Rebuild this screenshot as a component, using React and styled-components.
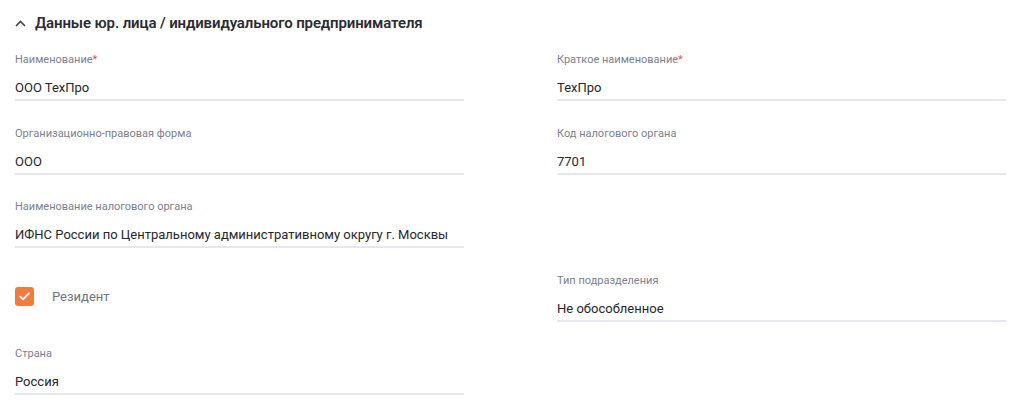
import React from "react";
import styled, { createGlobalStyle } from "styled-components";

const GlobalStyle = createGlobalStyle`
  body {
    margin: 0;
    background: #ffffff;
    font-family: Roboto, "Liberation Sans", sans-serif;
  }
`;

const Section = styled.section`
  padding: 11px 18px 0 15px;
`;

const Header = styled.div`
  display: flex;
  align-items: center;
  gap: 9px;
  height: 24px;
  margin-bottom: 18px;
  color: #2a2b33;
  font-size: 15px;
  font-weight: 600;
  letter-spacing: -0.12px;
`;

const Grid = styled.div`
  display: grid;
  grid-template-columns: 449px 449px;
  column-gap: 93px;
  row-gap: 25.5px;
`;

const Field = styled.div`
  display: flex;
  flex-direction: column;
  height: 48px;
`;

const Label = styled.div`
  font-size: 11px;
  line-height: 14px;
  color: #7b8091;
  margin-bottom: 11px;
`;

const Required = styled.span`
  color: #e8505b;
`;

const Value = styled.div`
  font-size: 13px;
  line-height: 20px;
  color: #25262e;
  padding-bottom: 1px;
  border-bottom: 2px solid #e6e7ee;
  white-space: nowrap;
`;

const CheckRow = styled.label`
  display: flex;
  align-items: center;
  gap: 18px;
  height: 48px;
  padding-bottom: 2px;
  box-sizing: border-box;
`;

const Box = styled.span`
  width: 19px;
  height: 19px;
  border-radius: 3px;
  background: #f47b3e;
  display: flex;
  align-items: center;
  justify-content: center;
`;

const CheckText = styled.span`
  font-size: 13px;
  color: #6e7381;
`;

const Empty = styled.div``;

function FormField({ label, value, required }) {
  return (
    <Field>
      <Label>
        {label}
        {required && <Required>*</Required>}
      </Label>
      <Value>{value}</Value>
    </Field>
  );
}

function App() {
  return (
    <>
      <GlobalStyle />
      <Section>
        <Header>
          <svg width="11" height="7" viewBox="0 0 11 7">
            <path d="M1 6 L5.5 1.5 L10 6" fill="none" stroke="#3d4350" strokeWidth="1.6" />
          </svg>
          Данные юр. лица / индивидуального предпринимателя
        </Header>
        <Grid>
          <FormField label="Наименование" value="ООО ТехПро" required />
          <FormField label="Краткое наименование" value="ТехПро" required />
          <FormField label="Организационно-правовая форма" value="ООО" />
          <FormField label="Код налогового органа" value="7701" />
          <FormField
            label="Наименование налогового органа"
            value="ИФНС России по Центральному административному округу г. Москвы"
          />
          <Empty />
          <CheckRow>
            <Box>
              <svg width="11" height="9" viewBox="0 0 11 9">
                <path d="M1.2 4.6 L4 7.3 L9.8 1.5" fill="none" stroke="#fff" strokeWidth="1.8" strokeLinecap="round" strokeLinejoin="round" />
              </svg>
            </Box>
            <CheckText>Резидент</CheckText>
          </CheckRow>
          <FormField label="Тип подразделения" value="Не обособленное" />
          <FormField label="Страна" value="Россия" />
        </Grid>
      </Section>
    </>
  );
}

export default App;
